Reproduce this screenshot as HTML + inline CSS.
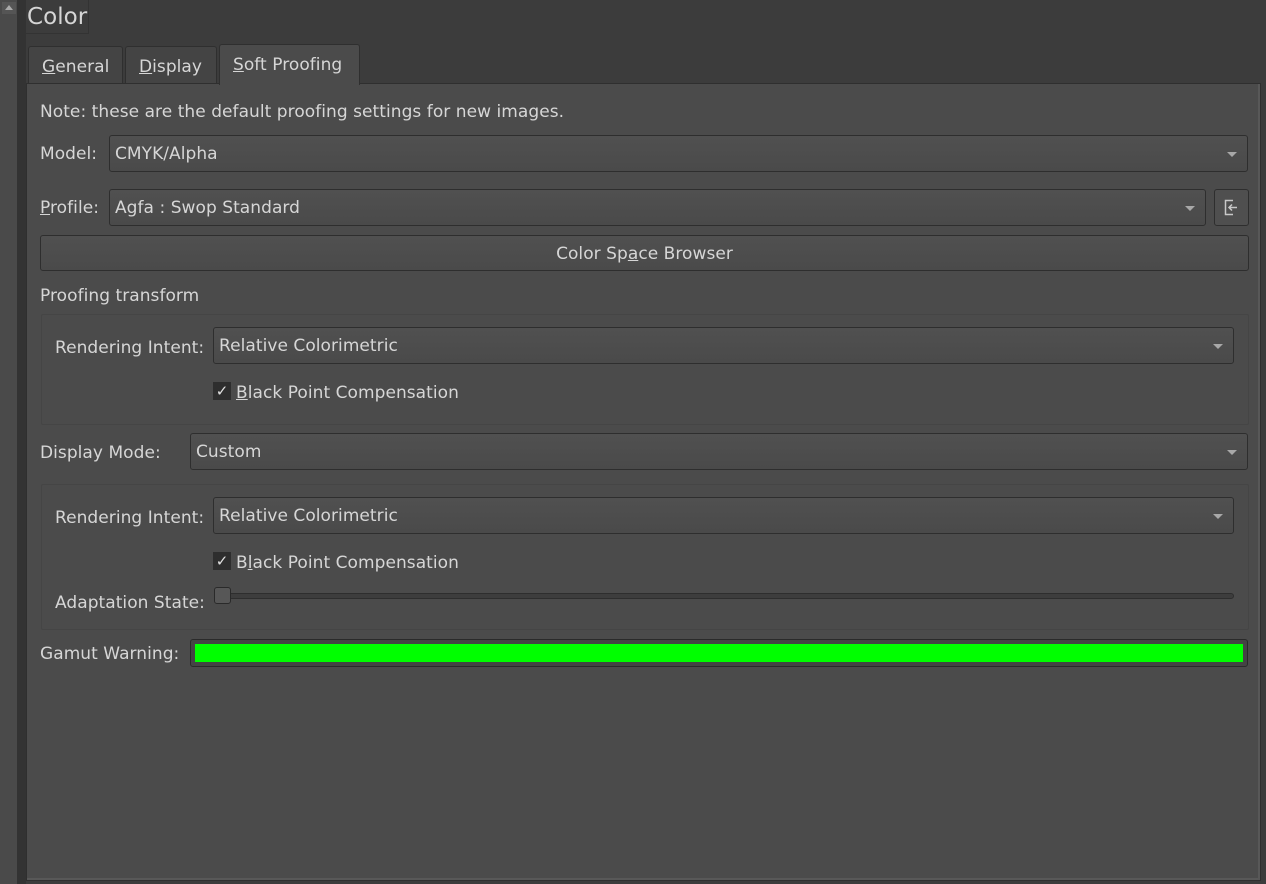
<!DOCTYPE html>
<html><head><meta charset="utf-8"><style>
*{box-sizing:border-box;margin:0;padding:0}
body{width:1266px;height:884px;background:#3c3c3c;font-family:"DejaVu Sans","Liberation Sans",sans-serif;font-size:17px;color:#d6d6d6;position:relative;overflow:hidden;letter-spacing:0.05px}
.a{position:absolute;white-space:nowrap}
.t{margin-top:2px}
.combo{position:absolute;height:37px;border:1px solid #2e2e2e;border-radius:3px;background:linear-gradient(#505050,#4a4a4a);padding-left:5px;line-height:37px}
.combo::after{content:"";position:absolute;right:10px;top:16px;border-left:5px solid transparent;border-right:5px solid transparent;border-top:5px solid #a8a8a8}
.grp{position:absolute;border:1px solid #454545;border-radius:2px}
.cb{position:absolute;width:18px;height:18px;background:#2e2e2e;color:#e0e0e0;font-size:15px;line-height:18px;text-align:center}
u{text-decoration:underline}
.tab{position:absolute;top:46px;height:38px;border:1px solid #2f2f2f;border-bottom:none;border-radius:3px 3px 0 0;background:#444;line-height:40px;padding-left:13px}
</style></head><body>
<div class="a" style="left:0;top:0;width:18px;height:884px;background:#4a4a4a;border-right:1px solid #333"></div>
<div class="a" style="left:2px;top:2px;width:14px;height:12px;background:#555"></div>
<div class="a" style="left:5px;top:5px;border-left:4px solid transparent;border-right:4px solid transparent;border-bottom:5px solid #aaa"></div>
<div class="a" style="left:18px;top:0;width:8px;height:884px;background:#333"></div>
<div class="a" style="left:26px;top:0;width:63px;height:34px;border-right:1px solid #333;border-bottom:1px solid #333;font-size:23px;line-height:34px;padding-left:1px">Color</div>
<div class="tab" style="left:28px;width:95px"><u>G</u>eneral</div>
<div class="tab" style="left:125px;width:92px"><u>D</u>isplay</div>
<div class="tab" style="left:219px;width:141px;top:44px;height:41px;background:#4b4b4b;z-index:2;padding-left:13px;line-height:41px"><u>S</u>oft Proofing</div>
<div class="a" style="left:26px;top:83px;width:1235px;height:798px;background:#4b4b4b;border:1px solid #2f2f2f;box-shadow:inset -2px -2px 0 #585858"></div>
<div class="a t" style="left:40px;top:100px">Note: these are the default proofing settings for new images.</div>
<div class="a t" style="left:40px;top:142px">Model:</div>
<div class="combo" style="left:109px;top:135px;width:1139px">CMYK/Alpha</div>
<div class="a t" style="left:40px;top:196px"><u>P</u>rofile:</div>
<div class="combo" style="left:109px;top:189px;width:1097px">Agfa : Swop Standard</div>
<div class="a" style="left:1214px;top:189px;width:35px;height:37px;border:1px solid #2e2e2e;border-radius:3px;background:#4f4f4f"></div>
<svg class="a" style="left:1222px;top:198px" width="20" height="20"><path d="M11 2.5H3.5V16.5H11" stroke="#c8c8c8" stroke-width="1.5" fill="none"/><path d="M15 9.5H7M10 6.5L7 9.5 10 12.5" stroke="#c8c8c8" stroke-width="1.5" fill="none"/></svg>
<div class="a" style="left:40px;top:235px;width:1209px;height:36px;border:1px solid #2e2e2e;border-radius:3px;background:linear-gradient(#505050,#4a4a4a);text-align:center;line-height:36px">Color Sp<u>a</u>ce Browser</div>
<div class="a t" style="left:40px;top:284px">Proofing transform</div>
<div class="grp" style="left:41px;top:314px;width:1208px;height:111px"></div>
<div class="a t" style="left:55px;top:336px">Rendering Intent:</div>
<div class="combo" style="left:213px;top:327px;width:1021px">Relative Colorimetric</div>
<div class="cb" style="left:213px;top:382px">✓</div>
<div class="a t" style="left:236px;top:381px"><u>B</u>lack Point Compensation</div>
<div class="a t" style="left:40px;top:441px">Display Mode:</div>
<div class="combo" style="left:190px;top:433px;width:1058px">Custom</div>
<div class="grp" style="left:41px;top:484px;width:1208px;height:146px"></div>
<div class="a t" style="left:55px;top:506px">Rendering Intent:</div>
<div class="combo" style="left:213px;top:497px;width:1021px">Relative Colorimetric</div>
<div class="cb" style="left:213px;top:552px">✓</div>
<div class="a t" style="left:236px;top:551px">B<u>l</u>ack Point Compensation</div>
<div class="a t" style="left:55px;top:591px">Adaptation State:</div>
<div class="a" style="left:220px;top:593px;width:1014px;height:6px;border:1px solid #2e2e2e;border-radius:3px;background:#3d3d3d"></div>
<div class="a" style="left:214px;top:587px;width:17px;height:17px;border:1px solid #2a2a2a;border-radius:3px;background:#575757"></div>
<div class="a t" style="left:40px;top:642px">Gamut Warning:</div>
<div class="a" style="left:190px;top:639px;width:1058px;height:28px;border:1px solid #2a2a2a;border-radius:3px;background:#444;padding:4px"><div style="width:100%;height:100%;background:#00ff00"></div></div>
</body></html>
